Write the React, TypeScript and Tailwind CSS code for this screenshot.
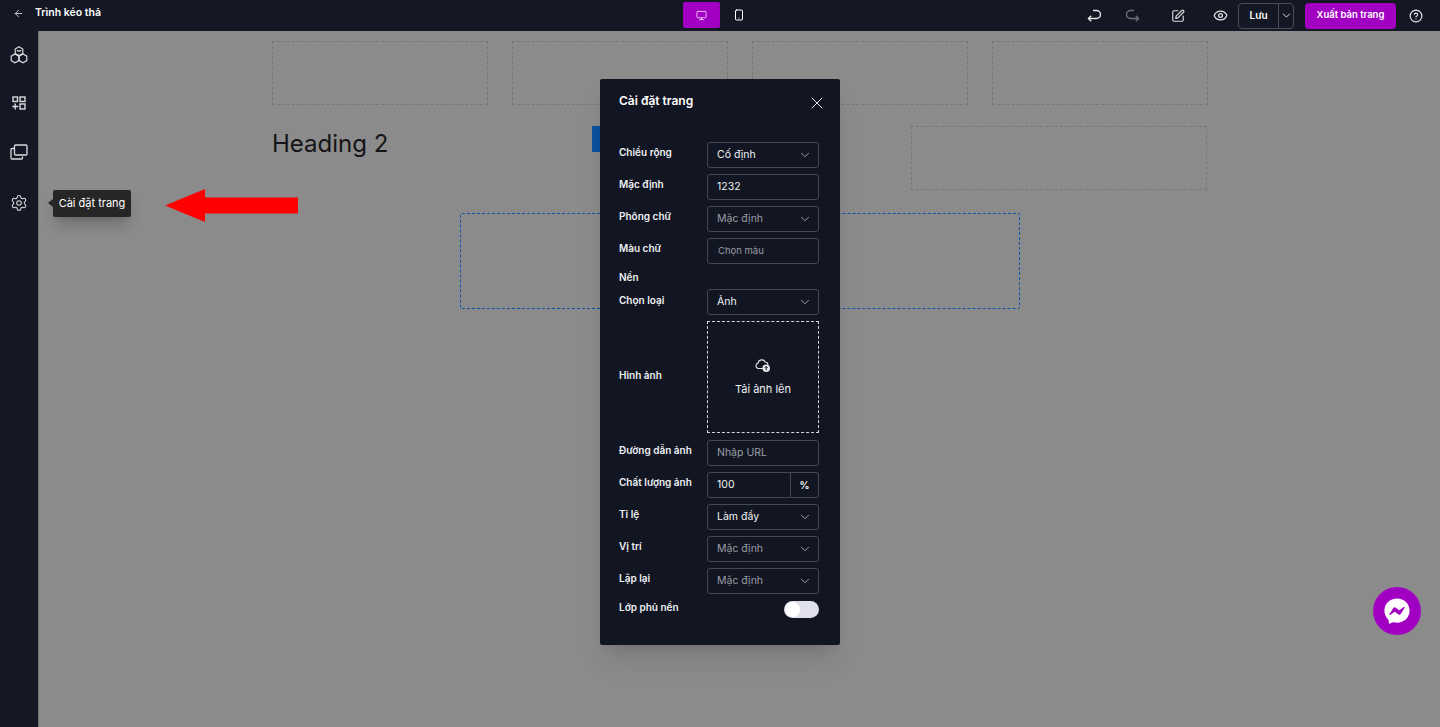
import React from "react";
import { ArrowLeft, ChevronDown, CircleHelp, Eye, Monitor, Settings, Smartphone, SquarePen, X } from "lucide-react";
import { FaFacebookMessenger } from "react-icons/fa";

const hexagon = (cx: number, cy: number) =>
  `M${cx} ${cy - 4.4}L${cx + 3.8} ${cy - 2.2}V${cy + 2.2}L${cx} ${cy + 4.4}L${cx - 3.8} ${cy + 2.2}V${cy - 2.2}Z`;

const CubesIcon: React.FC = () => (
  <svg width="18" height="18" viewBox="0 0 18 18" fill="none" stroke="currentColor" strokeWidth="1.2">
    <path d={hexagon(9, 5.2)} />
    <path d={hexagon(5, 12.4)} />
    <path d={hexagon(13, 12.4)} />
    <path d="M6.8 4.2 9 5.4l2.2-1.2" />
  </svg>
);

const GridPlus: React.FC = () => (
  <svg width="14" height="14" viewBox="0 0 14 14" fill="none" stroke="currentColor" strokeWidth="1.4">
    <rect x="1" y="1" width="4.5" height="4.5" />
    <rect x="8" y="1" width="5" height="4.5" />
    <rect x="8" y="8" width="5" height="5" />
    <path d="M3.2 7.5v6M0.2 10.5h6" />
  </svg>
);

const Layers: React.FC = () => (
  <svg width="18" height="16" viewBox="0 0 18 16" fill="none" stroke="currentColor" strokeWidth="1.3">
    <rect x="4.5" y="1" width="12.5" height="10" rx="1" />
    <path d="M4 4.5H2a1 1 0 0 0-1 1V14a1 1 0 0 0 1 1h9.5a1 1 0 0 0 1-1v-1.5" />
  </svg>
);

const UndoIcon: React.FC<{ flip?: boolean }> = ({ flip }) => (
  <svg
    width="14"
    height="14"
    viewBox="0 0 14 14"
    fill="none"
    stroke="currentColor"
    strokeWidth="1.4"
    className={flip ? "-scale-x-100" : ""}
  >
    <path d="M6 1.5h3.5a4 4 0 0 1 0 8H1.5" />
    <path d="M4.2 6.8 1.5 9.5l2.7 2.7" />
  </svg>
);

const UploadIcon: React.FC = () => (
  <svg width="16" height="15" viewBox="0 0 16 15" fill="none">
    <path
      d="M9.5 10.5H3.6a2.8 2.8 0 0 1-.5-5.5 3.7 3.7 0 0 1 7-1 3 3 0 0 1 2.9 2.6"
      stroke="#e6e7e9"
      strokeWidth="1.1"
    />
    <circle cx="11.2" cy="10.2" r="3.8" fill="#e6e7e9" />
    <path d="M11.2 12.2V8.6M9.8 9.8l1.4-1.4 1.4 1.4" stroke="#121622" strokeWidth="1" />
  </svg>
);

const SelectField: React.FC<{ value: string; muted?: boolean }> = ({ value, muted }) => (
  <div className="flex h-[26px] w-[112px] items-center justify-between rounded-[3px] border border-[#45484f] pl-[9px] pr-[6px]">
    <span className={`text-[10.5px] ${muted ? "text-[#9a9ca3]" : "text-[#eef0f3]"}`}>{value}</span>
    <ChevronDown size={14} strokeWidth={1.2} className="text-[#d5d6d9]" />
  </div>
);

const InputField: React.FC<{ value: string; muted?: boolean; small?: boolean }> = ({ value, muted, small }) => (
  <div className={`flex h-[26px] w-[112px] items-center rounded-[3px] border border-[#45484f] ${small ? "pl-[10px]" : "pl-[9px]"}`}>
    <span className={`${small ? "text-[9.5px]" : "text-[10.5px]"} ${muted ? "text-[#9a9ca3]" : "text-[#eef0f3]"}`}>
      {value}
    </span>
  </div>
);

const Row: React.FC<{ label: string; children: React.ReactNode }> = ({ label, children }) => (
  <div className="flex items-start justify-between">
    <span className="mt-[3px] text-[10px] font-semibold leading-[14px] text-[#eef0f3]">{label}</span>
    {children}
  </div>
);

const DashBox: React.FC<{ className?: string }> = ({ className }) => (
  <div className={`h-16 border border-dashed border-[#777777] ${className ?? ""}`}></div>
);

const App: React.FC = () => {
  return (
    <div className="relative flex h-[727px] w-[1440px] flex-col overflow-hidden bg-[#8b8b8b] font-['Inter',sans-serif]">
      {/* top bar */}
      <header className="relative flex h-[31px] shrink-0 items-center justify-between bg-[#141824] text-white">
        <div className="mb-[4px] flex items-center pl-[13px]">
          <ArrowLeft size={11} className="text-[#d5d6d9]" />
          <span className="ml-[11px] text-[10.5px] font-semibold leading-none">Trình kéo thả</span>
        </div>
        <div className="absolute left-[683px] top-[2px] flex items-center">
          <div className="flex h-[26px] w-[37px] items-center justify-center rounded-[2px] bg-[#a100c2]">
            <Monitor size={11} className="text-[#f0d0f5]" />
          </div>
          <div className="flex h-[26px] w-[37px] items-center justify-center">
            <Smartphone size={12} />
          </div>
        </div>
        <div className="flex items-center">
          <span className="text-[#e6e7e9]"><UndoIcon /></span>
          <span className="ml-[25px] text-[#6d7079]"><UndoIcon flip /></span>
          <SquarePen size={14} className="ml-[31px] text-[#d5d6d9]" />
          <Eye size={15} className="ml-[28px] text-[#e6e7e9]" />
          <div className="ml-[10px] flex h-[26px] w-[56px] items-center rounded-[4px] border border-[#4b4e55]">
            <span className="flex h-full w-[41px] items-center justify-center border-r border-[#4b4e55] text-[10px] font-semibold">
              Lưu
            </span>
            <ChevronDown size={13} strokeWidth={1.6} className="ml-[1px]" />
          </div>
          <button className="ml-[11px] flex h-[26px] w-[91px] items-center justify-center rounded-[4px] bg-[#a100c2] text-[9.5px] font-semibold text-white">
            Xuất bản trang
          </button>
          <CircleHelp size={14} className="ml-[13px] mr-[17px] text-[#e6e7e9]" />
        </div>
      </header>

      <div className="flex min-h-0 flex-1">
        {/* left rail */}
        <aside className="flex w-[39px] shrink-0 flex-col items-center border-r border-[#6e6e6e] bg-[#141824] pt-[15px] text-[#d9dadd]">
          <div className="flex h-[18px] items-center"><CubesIcon /></div>
          <div className="mt-[30px] flex h-[18px] items-center"><GridPlus /></div>
          <div className="mt-[31px] flex h-[18px] items-center"><Layers /></div>
          <div className="mt-[33px] flex h-[18px] items-center"><Settings size={18} strokeWidth={1.4} /></div>
        </aside>

        {/* canvas */}
        <main className="flex-1 pl-[233px] pt-[10px]">
          <div className="w-[936px]">
            <div className="flex gap-6">
              <DashBox className="flex-1" />
              <DashBox className="flex-1" />
              <DashBox className="flex-1" />
              <DashBox className="flex-1" />
            </div>
            <div className="mt-[21px] flex items-start">
              <h2 className="mt-[2px] w-[320px] text-[24px] font-normal leading-[32px] text-[#141416]">Heading 2</h2>
              <div className="h-[26px] w-[60px] bg-[#0b4f9e]"></div>
              <DashBox className="ml-[259px] w-[296px]" />
            </div>
            <div className="ml-[188px] mt-[23px] h-[96px] w-[560px] rounded-[2px] border border-dashed border-[#0b56a8]"></div>
          </div>
        </main>
      </div>

      {/* tooltip */}
      <div className="absolute left-[53px] top-[190px] flex h-[27px] w-[78px] items-center justify-center rounded-[2px] bg-[#262626] text-[11px] text-white shadow-lg shadow-black/20">
        Cài đặt trang
        <span className="absolute -left-[5px] top-[9px] h-0 w-0 border-y-[4px] border-r-[5px] border-y-transparent border-r-[#262626]"></span>
      </div>

      {/* red arrow annotation */}
      <svg className="absolute left-[165px] top-[188px]" width="134" height="36" viewBox="0 0 134 36">
        <path d="M0 17.5 40 1V9.5H133V25.5H40V34Z" fill="#ff0000" />
      </svg>

      {/* modal */}
      <div className="absolute left-[600px] top-[79px] h-[566px] w-[240px] rounded-[2px] bg-[#121622] pl-[19px] pr-[21px] pt-[14px] text-white shadow-xl shadow-black/10">
        <div className="flex h-[21px] items-start justify-between">
          <span className="text-[12px] font-semibold leading-[16px]">Cài đặt trang</span>
          <X size={20} strokeWidth={1.2} className="-mr-[8px] text-[#e6e7e9]" />
        </div>
        <div className="mt-[28px] flex flex-col gap-[6px]">
          <Row label="Chiều rộng"><SelectField value="Cố định" /></Row>
          <Row label="Mặc định"><InputField value="1232" /></Row>
          <Row label="Phông chữ"><SelectField value="Mặc định" muted /></Row>
          <Row label="Màu chữ"><InputField value="Chọn màu" muted small /></Row>
        </div>
        <div className="mt-[6px] text-[10px] font-semibold leading-[14px] text-[#eef0f3]">Nền</div>
        <div className="mt-[5px] flex flex-col gap-[6px]">
          <div className="flex items-start justify-between">
            <span className="mt-[4px] text-[10px] font-semibold leading-[14px] text-[#eef0f3]">Chọn loại</span>
            <SelectField value="Ảnh" />
          </div>
          <div className="flex items-center justify-between">
            <span className="mb-[4px] text-[10px] font-semibold leading-[14px] text-[#eef0f3]">Hình ảnh</span>
            <div className="flex h-[112px] w-[112px] flex-col items-center justify-center border border-dashed border-[#d5d6d9] pt-[1px]">
              <UploadIcon />
              <span className="mt-[8px] text-[11px] text-[#eef0f3]">Tải ảnh lên</span>
            </div>
          </div>
          <div className="mt-[1px]">
            <Row label="Đường dẫn ảnh"><InputField value="Nhập URL" muted /></Row>
          </div>
          <Row label="Chất lượng ảnh">
            <div className="flex h-[26px] w-[112px]">
              <div className="flex w-[84px] items-center rounded-l-[3px] border border-[#45484f] pl-[9px] text-[10.5px] text-[#eef0f3]">
                100
              </div>
              <div className="flex flex-1 items-center justify-center rounded-r-[3px] border border-l-0 border-[#45484f] text-[10px] font-semibold">
                %
              </div>
            </div>
          </Row>
          <Row label="Tỉ lệ"><SelectField value="Làm đầy" /></Row>
          <Row label="Vị trí"><SelectField value="Mặc định" muted /></Row>
          <Row label="Lặp lại"><SelectField value="Mặc định" muted /></Row>
          <div className="flex items-start justify-between pt-[1px]">
            <span className="-mt-[1px] text-[10px] font-semibold leading-[14px] text-[#eef0f3]">Lớp phủ nền</span>
            <div className="flex h-[17px] w-[35px] items-center rounded-full bg-[#e0e0ec] pl-[1px]">
              <span className="h-[15px] w-[15px] rounded-full bg-white"></span>
            </div>
          </div>
        </div>
      </div>

      {/* chat bubble */}
      <div className="absolute left-[1373px] top-[587px] flex h-12 w-12 items-center justify-center rounded-full bg-[#a100c2]">
        <FaFacebookMessenger size={26} className="text-white" />
      </div>
    </div>
  );
};

export default App;
